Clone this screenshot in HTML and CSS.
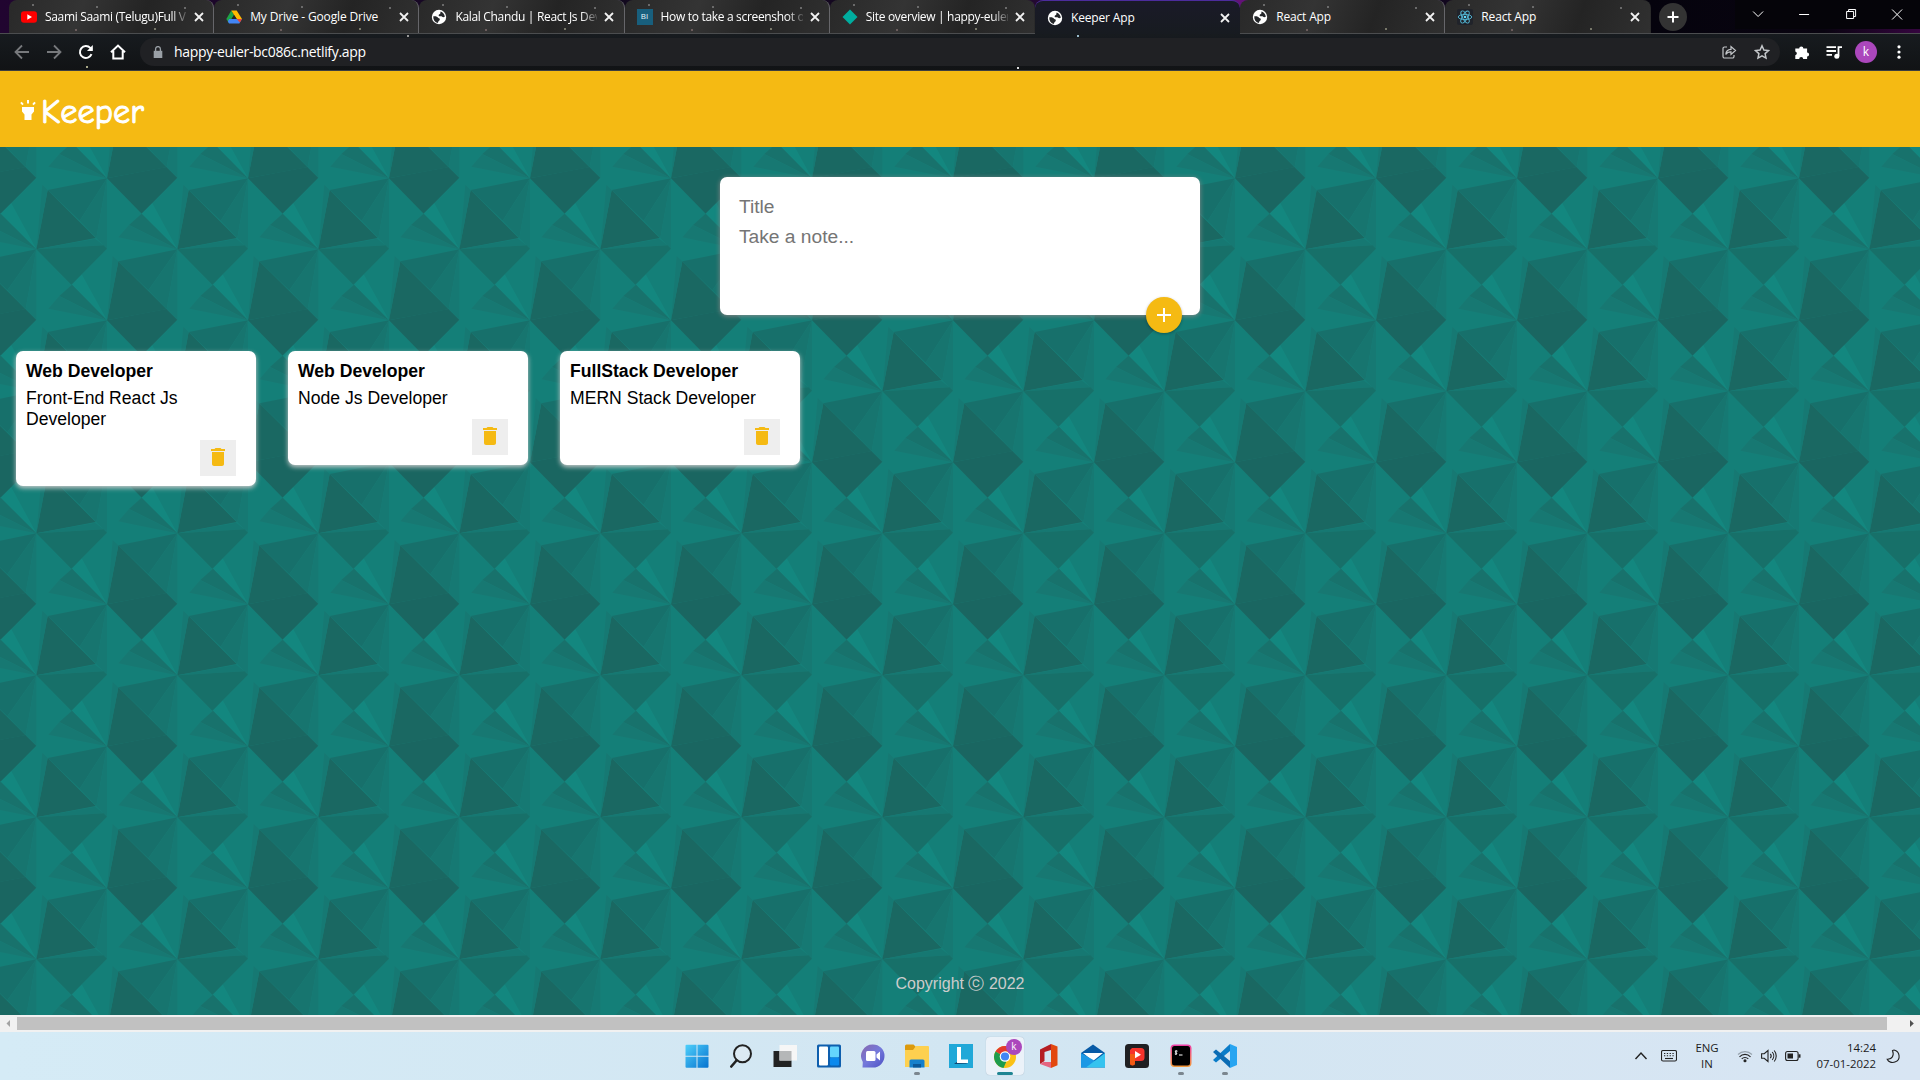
FILE: index.html
```html
<!DOCTYPE html>
<html lang="en">
<head>
<meta charset="utf-8">
<title>Keeper App</title>
<link rel="stylesheet" href="styles.css">
</head>
<body>
<svg class="defs" width="0" height="0">
  <defs>
    <symbol id="close" viewBox="0 0 16 16"><path d="M4 4l8 8M12 4l-8 8" stroke="#f2f2f2" stroke-width="1.8" fill="none"/></symbol>
    <symbol id="globe" viewBox="0 0 16 16"><circle cx="8" cy="8" r="7.2" fill="#fff"/><path d="M2.300 7.300c2.200-.3 4.200.1 4.900 1.600 1 .2 1.900.5 1.600 1.700-.2 1.100-1.200 1.200-1.500 2.100-.1.500-.4.900-.8 1.200C3.600 13.200 2 10.500 2.300 7.300zM9.600 2.500c2.300.8 4 2.800 4.200 5.300-.9.400-2 .5-2.700-.1-1-.9-2.300.1-3.200-.7-.9-.9.300-1.500 1-1.900.9-.6.200-1.600.7-2.600z" fill="#25272a"/></symbol>
    <symbol id="trash" viewBox="0 0 24 24"><path d="M6 19c0 1.100.9 2 2 2h8c1.100 0 2-.9 2-2V7H6v12zM19 4h-3.500l-1-1h-5l-1 1H5v2h14V4z" fill="#f5ba13"/></symbol>
    <g id="facets">
      <path d="M321 313L355 136 500 280z" fill="#1a6862"/>
      <path d="M321 313L500 279 532 311 425 419z" fill="#1a6661"/>
      <path d="M355 136L532 100 445 223z" fill="#17706b"/>
      <path d="M532 100L445 223 500 280z" fill="#17756f"/>
      <path d="M532 100L500 280 532 311z" fill="#167973"/>
      <path d="M338 120L355 136 321 313z" fill="#167973"/>
      <path d="M216 206L245 175 321 313z" fill="#13877f"/>
      <path d="M216 206L321 313 178 240z" fill="#18726c"/>
      <path d="M178 240L321 313 145 278z" fill="#177872"/>
      <path d="M532 526L566 348 710 492z" fill="#1a6862"/>
      <path d="M566 348L744 313 662 440z" fill="#17706b"/>
      <path d="M744 313L662 440 712 492z" fill="#17756f"/>
      <path d="M744 313L712 492 744 524z" fill="#167973"/>
      <path d="M532 526L708 494 734 514z" fill="#167872"/>
      <path d="M532 526L734 514 744 524 637 632z" fill="#177069"/>
      <path d="M550 332L566 348 532 526z" fill="#167973"/>
      <path d="M425 419L457 388 532 526z" fill="#13877f"/>
      <path d="M425 419L532 526 387 453z" fill="#18726c"/>
      <path d="M387 453L532 526 355 490z" fill="#177872"/>
    </g>
    <pattern id="tile" width="141" height="142" patternUnits="userSpaceOnUse">
      <rect width="141" height="142" fill="#147f78"/>
      <g transform="scale(.33333) translate(0 9)">
        <use href="#facets"/><use href="#facets" x="-423"/><use href="#facets" x="-846"/>
        <use href="#facets" y="-426"/><use href="#facets" x="-423" y="-426"/><use href="#facets" x="-846" y="-426"/>
      </g>
    </pattern>
  </defs>
</svg>

<div class="window">
  <div class="tabstrip">
    <div class="tab">
      <svg class="fav" viewBox="0 0 16 16"><rect y="2.300" width="16" height="11.400" rx="3" fill="#f00"/><path d="M6.300 5.300v5.400L11 8z" fill="#fff"/></svg>
      <span class="label fade">Saami Saami (Telugu)Full V</span><svg class="x"><use href="#close"/></svg>
    </div>
    <div class="tab">
      <svg class="fav" viewBox="0 0 16 16"><path d="M5.300 1.500L8 6 3 14.200.3 10z" fill="#1ea446"/><path d="M5.300 1.500h5.400L16 10h-5.300z" fill="#ffba00"/><path d="M3.200 10H16l-2.700 4.500H3L1.800 12.300z" fill="#4285f4"/><path d="M8 6l2.700 4H5.500z" fill="#252525"/><path d="M10.700 10H16l-2.100 3.500z" fill="#ea4335"/></svg>
      <span class="label">My Drive - Google Drive</span><svg class="x"><use href="#close"/></svg>
    </div>
    <div class="tab">
      <svg class="fav"><use href="#globe"/></svg>
      <span class="label fade">Kalal Chandu | React Js Dev</span><svg class="x"><use href="#close"/></svg>
    </div>
    <div class="tab">
      <span class="fav bi">BI</span>
      <span class="label fade">How to take a screenshot o</span><svg class="x"><use href="#close"/></svg>
    </div>
    <div class="tab last">
      <svg class="fav" viewBox="0 0 16 16"><path d="M8 .5L15.500 8 8 15.500.5 8z" fill="#00ad9f"/></svg>
      <span class="label fade">Site overview | happy-euler</span><svg class="x"><use href="#close"/></svg>
    </div>
    <div class="tab active">
      <svg class="fav"><use href="#globe"/></svg>
      <span class="label">Keeper App</span><svg class="x"><use href="#close"/></svg>
    </div>
    <div class="tab">
      <svg class="fav"><use href="#globe"/></svg>
      <span class="label">React App</span><svg class="x"><use href="#close"/></svg>
    </div>
    <div class="tab last">
      <svg class="fav" viewBox="0 0 16 16"><rect width="16" height="16" rx="2" fill="#20232a"/><g fill="none" stroke="#53b9d6" stroke-width=".9"><ellipse cx="8" cy="8" rx="6.800" ry="2.600"/><ellipse cx="8" cy="8" rx="6.800" ry="2.600" transform="rotate(60 8 8)"/><ellipse cx="8" cy="8" rx="6.800" ry="2.600" transform="rotate(120 8 8)"/></g><circle cx="8" cy="8" r="1.300" fill="#61dafb"/></svg>
      <span class="label">React App</span><svg class="x"><use href="#close"/></svg>
    </div>
    <div class="newtab"><svg width="16" height="16" viewBox="0 0 16 16"><path d="M8 2.500v11M2.500 8h11" stroke="#fff" stroke-width="2"/></svg></div>
    <div class="controls">
      <svg viewBox="0 0 46 28"><path d="M18 11.500l5 5 5-5" /></svg>
      <svg viewBox="0 0 46 28"><path d="M18 14.500h10"/></svg>
      <svg viewBox="0 0 46 28"><path d="M18.500 11.500h7v7h-7zM20.500 11.500v-2h7v7h-2"/></svg>
      <svg viewBox="0 0 46 28"><path d="M18 9.500l10 10M28 9.500l-10 10"/></svg>
    </div>
  </div>

  <div class="toolbar">
    <div class="nav">
      <svg viewBox="0 0 16 16"><path d="M15 8H2M8 1.500L1.500 8 8 14.500" stroke="#77797c"/></svg>
      <svg viewBox="0 0 16 16"><path d="M1 8h13M8 1.500L14.500 8 8 14.500" stroke="#77797c"/></svg>
      <svg viewBox="0 0 16 16"><path d="M13.500 10.200A6 6 0 1 1 12.300 3.900L14 5.600" stroke="#fff" stroke-width="2"/><path d="M14.800 1v6H9z" fill="#fff"/></svg>
      <svg viewBox="0 0 16 16"><path d="M1 8.300L8 1.600l7 6.700M3.300 7v7.500h9.400V7" stroke="#fff" stroke-width="2"/></svg>
    </div>
    <div class="omnibox">
      <svg class="lock" viewBox="0 0 10 12"><path d="M.7 4.800h8.600V12H.7z" fill="#9aa0a6"/><path d="M2.600 5V3a2.400 2.400 0 0 1 4.800 0v2" fill="none" stroke="#9aa0a6" stroke-width="1.300"/></svg>
      <span class="url">happy-euler-bc086c.netlify.app</span>
      <svg class="act" viewBox="0 0 16 16"><path d="M6 3H3.500a1.500 1.500 0 0 0-1.500 1.500v8A1.500 1.500 0 0 0 3.500 14h8a1.500 1.500 0 0 0 1.500-1.500V11M4.800 10.500C5 7 7 5.400 10 5.300V2.500l4.500 4-4.500 4V7.800C7.500 7.700 6 8.500 4.800 10.500z"/></svg>
      <svg class="act" viewBox="0 0 16 16"><path d="M8 1.800l1.900 4.200 4.600.5-3.400 3.100.9 4.500-4-2.300-4 2.300.9-4.500L1.500 6.500 6.100 6z" stroke-width="1.500"/></svg>
    </div>
    <div class="tools">
      <svg viewBox="0 0 16 16"><path d="M1.300 4.500h3.900a2.100 2.100 0 1 1 4.200 0h3.700v3.900a2 2 0 1 1 0 4V15H9.200a2 2 0 0 0-4 0H1.300v-3.700a2 2 0 0 0 0-3.900z" fill="#fff"/></svg>
      <svg viewBox="0 0 16 16"><path d="M.5 3.200h9.500M.5 7h9.500M.5 10.800h5.500M12.500 12V3.200H16" fill="none" stroke="#fff" stroke-width="1.800"/><circle cx="10.800" cy="12.200" r="2.500" fill="#fff"/></svg>
      <span class="avatar">k</span>
      <svg viewBox="0 0 16 16" fill="#fff"><circle cx="8" cy="2.800" r="1.600"/><circle cx="8" cy="8" r="1.600"/><circle cx="8" cy="13.200" r="1.600"/></svg>
    </div>
  </div>

  <main class="page">
    <svg class="wallpaper" width="1920" height="944"><rect width="1920" height="944" fill="url(#tile)"/></svg>
    <header class="header">
      <svg width="16" height="22" viewBox="0 0 16 22"><path d="M2 8h12v4.500l-2.500 3V21h-7v-5.500L2 12.500zM7 1h2v3.500H7zM.2 4l1.500-1.200 2 2.200-1.400 1.200zM15.800 4l-1.500-1.200-2 2.200 1.400 1.200z" fill="#fff"/></svg>
      <h1>Keeper</h1>
    </header>
    <form class="create">
      <span class="field">Title</span>
      <span class="field">Take a note...</span>
      <span class="add"><svg width="24" height="24" viewBox="0 0 24 24"><path d="M19 13h-6v6h-2v-6H5v-2h6V5h2v6h6v2z" fill="#fff"/></svg></span>
    </form>
    <section class="notes">
      <article class="note"><h2>Web Developer</h2><p>Front-End React Js Developer</p><span class="delete"><svg><use href="#trash"/></svg></span></article>
      <article class="note"><h2>Web Developer</h2><p>Node Js Developer</p><span class="delete"><svg><use href="#trash"/></svg></span></article>
      <article class="note"><h2>FullStack Developer</h2><p>MERN Stack Developer</p><span class="delete"><svg><use href="#trash"/></svg></span></article>
    </section>
    <footer class="footer">Copyright ⓒ 2022</footer>
  </main>

  <div class="scrollbar">
    <svg viewBox="0 0 17 17"><path d="M10 5v7L6.500 8.500z" fill="#a3a3a3"/></svg>
    <div class="thumb"></div>
    <svg class="right" viewBox="0 0 17 17"><path d="M7 5v7l3.800-3.500z" fill="#505050"/></svg>
  </div>

  <div class="taskbar">
    <div class="apps">
      <div class="app"><svg viewBox="0 0 24 24"><defs><linearGradient id="w" x2="1" y2="1"><stop stop-color="#4fd0fb"/><stop offset="1" stop-color="#0672cf"/></linearGradient></defs><path d="M.5 1.700A1 1 0 0 1 1.500.7h10v11H.500zM12.500.7h10a1 1 0 0 1 1 1v10h-11zM.5 12.700h11v11h-10a1 1 0 0 1-1-1zM12.500 12.700h11v10a1 1 0 0 1-1 1h-10z" fill="url(#w)"/></svg></div>
      <div class="app"><svg viewBox="0 0 24 24"><circle cx="13.500" cy="9.800" r="8.500" fill="#dceaf3" stroke="#222" stroke-width="2"/><path d="M7.500 16.500L2.300 22.500" stroke="#222" stroke-width="2.600" stroke-linecap="round"/></svg></div>
      <div class="app"><svg viewBox="0 0 24 24"><path d="M.5 7h18v16H.500z" fill="#222"/><path d="M6.500 1H24v15.500H6.500z" fill="#f6f6f6"/><path d="M6.500 7h12v9.500h-12z" fill="#b5b7b8"/></svg></div>
      <div class="app"><svg viewBox="0 0 24 24"><rect y=".5" width="24" height="23" rx="1.500" fill="#0e5fae"/><rect x="2" y="2.500" width="9" height="19" rx="1" fill="#fff"/><rect x="13" y="2.500" width="9" height="11" rx="1" fill="#65d5fd"/><rect x="13" y="13.500" width="9" height="8" rx="1" fill="#0b89ed"/></svg></div>
      <div class="app"><svg viewBox="0 0 24 24"><defs><linearGradient id="c" x2="1" y2="1"><stop stop-color="#8867ad"/><stop offset=".5" stop-color="#7479db"/><stop offset="1" stop-color="#4c50c4"/></linearGradient></defs><path d="M12 .5a11.500 11.500 0 1 1 0 23H1.500L1.800 18A11.500 11.500 0 0 1 12 .5z" fill="url(#c)"/><rect x="5" y="7" width="9.500" height="10" rx="1.500" fill="#fff"/><path d="M15.500 10.500L19 7.500v9l-3.500-3z" fill="#fff"/></svg></div>
      <div class="app run"><svg viewBox="0 0 24 24"><path d="M0 2a1.500 1.500 0 0 1 1.500-1.500h7L11 3v4H0z" fill="#dc9a0c"/><path d="M0 6h8l3-4h12a1 1 0 0 1 1 1v20H0z" fill="#fdd04f"/><path d="M4.500 23.500V17a1.500 1.500 0 0 1 1.500-1.500h12a1.500 1.500 0 0 1 1.500 1.500v6.500z" fill="#1580cc"/><path d="M8 20h8v3.500H8z" fill="#0a5899"/></svg></div>
      <div class="app"><svg viewBox="0 0 24 24"><rect width="24" height="24" fill="#21a8d8"/><path d="M8 3v15l-3 2 14-.5-8-2z" fill="#103f68"/><path d="M8 3h4v12.500h7V19H8z" fill="#fff"/></svg></div>
      <div class="app current"><svg viewBox="0 0 24 24"><circle cx="12" cy="13" r="11" fill="#fbc116"/><path d="M12 13L2.500 7.500a11 11 0 0 1 19-.0H12z" fill="#e33b2e"/><path d="M2.500 7.500L12 13l1 5.300-2.500 5.600A11 11 0 0 1 2.500 7.500z" fill="#1e9c4d"/><circle cx="12" cy="12.500" r="5.300" fill="#fff"/><circle cx="12" cy="12.500" r="4.100" fill="#4285f4"/></svg><span class="badge">k</span></div>
      <div class="app"><svg viewBox="0 0 24 24"><path d="M3 5.500L14 0v6l-6.500 2v9L3 20z" fill="#b51d22"/><path d="M14 0l6.500 2.500v18.700L14 24z" fill="#e2480f"/><path d="M3 20l3.500-2H14v6z" fill="#e56480"/></svg></div>
      <div class="app"><svg viewBox="0 0 24 24"><path d="M0 9L12 .5 24 9v14.500H0z" fill="#075aa6"/><path d="M2 9h20l-10 8z" fill="#fff"/><path d="M0 9l15 8.500-8 6H0z" fill="#1c98e5"/><path d="M24 9L5 23.500h19z" fill="#35c3ef"/></svg></div>
      <div class="app"><svg viewBox="0 0 24 24"><rect width="24" height="24" rx="3.500" fill="#202022"/><path d="M7 4h9a3.500 3.500 0 0 1 3.500 3.500v6A3.500 3.500 0 0 1 16 17h-6v2a2.500 2.500 0 1 1-5-.5L5 6z" fill="#f6332c"/><path d="M5 10h5v9a2.500 2.500 0 1 1-5 0z" fill="#f35a14"/><path d="M10 7l6 3.700-6 3.600z" fill="#fff"/></svg></div>
      <div class="app run"><svg viewBox="0 0 24 24"><defs><linearGradient id="t" x2="0" y2="1"><stop stop-color="#ee3ba6"/><stop offset="1" stop-color="#f29a38"/></linearGradient></defs><rect x="1.500" y=".5" width="21" height="22.500" rx="4" fill="url(#t)"/><rect x="3" y="2" width="18" height="19.500" rx="2.500" fill="#000"/><path d="M8.500 7.200c-2-.8-3 .8-1.500 1.400 1.600.6.600 2.100-1.200 1.300M7 6v5M10 11h3.500" stroke="#fff" fill="none"/></svg></div>
      <div class="app run"><svg viewBox="0 0 24 24"><path d="M17 0l7 3v18l-7 3z" fill="#28a5f1"/><path d="M17 0v7L3 18.500l-3-2.500z" fill="#0a7cc8"/><path d="M0 8l3-2.500L17 17v7z" fill="#0b6cb4"/></svg></div>
    </div>
    <div class="tray">
      <svg class="i-caret" viewBox="0 0 16 16"><path d="M2.500 11L8 5l5.500 6" stroke-width="1.400"/></svg>
      <svg class="i-key" viewBox="0 0 16 16"><rect x=".5" y="2.500" width="15" height="10.500" rx="1.500"/><path d="M3 5.500h10M3 7.800h10" stroke-dasharray="1.300 1.500"/><path d="M4 10.500h8"/></svg>
      <div class="lang"><span>ENG</span><span>IN</span></div>
      <svg class="i-wifi" viewBox="0 0 16 16"><path d="M1 6.500a10 10 0 0 1 14 0" stroke="#96a2ad"/><path d="M2.500 8.800a7.500 7.500 0 0 1 11 0M4.700 10.900a4.600 4.600 0 0 1 6.600 0"/><circle cx="8" cy="12.700" r="1" fill="#222"/></svg>
      <svg class="i-vol" viewBox="0 0 16 16"><path d="M.6 5.700h2.600L7 2.500v11L3.200 10.300H.6zM9.300 5.800a3.400 3.400 0 0 1 0 4.400M11.200 4a6 6 0 0 1 0 8M13.200 2.500a8.500 8.500 0 0 1 0 11"/></svg>
      <svg class="i-bat" viewBox="0 0 16 16"><rect x=".6" y="3.500" width="12.500" height="9" rx="2"/><path d="M2.500 5.500H8v5H2.500z" fill="#222" stroke="none"/><path d="M14.500 6.300v3.400" stroke-width="2"/></svg>
      <div class="clock"><span>14:24</span><span>07-01-2022</span></div>
      <svg class="i-moon" viewBox="0 0 16 16"><path d="M9 2c6 1.500 7 9.500 1.500 11.800C7 15.300 3.300 14 2.200 11.300 7 11.600 9.500 7.500 7.500 2.500z"/></svg>
    </div>
  </div>
</div>
</body>
</html>
```
FILE: styles.css
```css
* { box-sizing: border-box; }
body { margin: 0; overflow: hidden; font-family: "Liberation Sans", Arial, sans-serif; }
.defs { position: absolute; }
svg { display: block; flex: none; }
.window { width: 1920px; height: 1080px; display: flex; flex-direction: column; }

/* browser chrome */
.tabstrip {
  height: 33px; flex: none; display: flex; padding-left: 9px;
  font: 12px/16px "Open Sans", "Noto Sans", sans-serif; color: #fff;
  background: linear-gradient(90deg, #210530, #11091d 35%, #170723 52%, #5a136f 62%, #67117b 66%, #130720 74%, #05030d 86%, #090410 95%, #35053f);
}
.tab {
  width: 205.200px; flex: none; display: flex; align-items: center; padding: 1px 0 0 12px;
  border-radius: 8px 8px 0 0; border-right: 1px solid #66666a;
  background:
    radial-gradient(circle at 24px 5px, #777 0 .6px, transparent 1.200px),
    radial-gradient(circle at 146px 29px, #887 0 .6px, transparent 1.200px),
    radial-gradient(circle at 88px 7px, #777 0 .6px, transparent 1.200px),
    radial-gradient(circle at 67px 30px, #766 0 .6px, transparent 1.200px),
    radial-gradient(circle at 176px 8px, #777 0 .6px, transparent 1.200px),
    linear-gradient(110deg, #292929, #343434 35%, #242424 65%, #303030);
}
.tab.last { border-right-color: transparent; }
.tab.active { background: linear-gradient(#1a1a28, #171b20); border-top: 1px solid #4c2c9c; border-right: 0; height: 34px; padding-top: 0; position: relative; }
.fav { width: 16px; height: 16px; margin-right: 8px; flex: none; }
.bi { background: #185f7d; color: #e6f4fa; font: 8px/14px "Open Sans", sans-serif; text-align: center; }
.label { width: 142px; white-space: nowrap; letter-spacing: -.15px; }
.label.fade { letter-spacing: -.32px; -webkit-mask-image: linear-gradient(90deg, #000 126px, transparent 145px); mask-image: linear-gradient(90deg, #000 126px, transparent 145px); }
.x { width: 16px; height: 16px; margin-left: 4px; }
.newtab { width: 28px; height: 28px; margin: 3px 0 0 8px; border-radius: 50%; background: #333; display: flex; align-items: center; justify-content: center; }
.controls { display: flex; margin-left: auto; height: 29px; padding-top: 0; background: #050409; }
.controls svg { width: 46.200px; height: 28px; fill: none; stroke: #fff; }
.toolbar {
  height: 38px; flex: none; display: flex; align-items: center; border-top: 1px solid #4b4d4f; border-bottom: 1px solid #3c3d40;
  background:
    radial-gradient(circle at 87px 33px, #aa8 0 .7px, transparent 1.300px),
    radial-gradient(circle at 408px 2px, #999 0 .7px, transparent 1.300px),
    radial-gradient(circle at 1018px 34px, #ddd 0 .7px, transparent 1.300px),
    radial-gradient(circle at 1078px 2px, #9bc 0 .7px, transparent 1.300px),
    linear-gradient(#171b1f, #111315);
}
.nav { display: flex; gap: 16px; padding-left: 14px; width: 140px; flex: none; }
.nav svg { width: 16px; height: 16px; fill: none; stroke-width: 1.800; }
.omnibox { width: 1640px; height: 28px; border-radius: 14px; background: #202124; display: flex; align-items: center; padding: 0 10px 0 13px; flex: none; }
.lock { width: 10px; height: 12px; }
.url { margin-left: 11px; flex: 1; font: 14px/20px "Open Sans", "Noto Sans", sans-serif; letter-spacing: -.33px; color: #fff; }
.act { width: 16px; height: 16px; margin-left: 17px; fill: none; stroke: #c4c7ca; stroke-width: 1.200; }
.tools { display: flex; align-items: center; padding-left: 14px; }
.tools svg { width: 16px; height: 16px; margin-right: 16px; }
.tools .avatar { width: 22px; height: 22px; margin: 0 14px 0 -3px; border-radius: 50%; background: #ab47bc; color: #fff; font: 12px/21px "Open Sans", sans-serif; text-align: center; }

/* page */
.page { height: 944px; flex: none; display: flex; flex-direction: column; position: relative; background: #147f78; overflow: hidden; }
.wallpaper { position: absolute; inset: 0; }
.header { height: 76px; flex: none; display: flex; align-items: center; padding: 0 20px; background: #f5ba13; position: relative; }
.header svg { margin-top: 1px; }
.header h1 { margin: 5px 0 0 5px; font: 400 34.400px/44px "Comic Neue", "McLaren", Lato, cursive; color: #fff; -webkit-text-stroke: 1px #fff; }
.create {
  width: 480px; height: 138px; flex: none; margin: 30px auto 0; padding: 15px 19px; position: relative;
  display: flex; flex-direction: column; background: #fff; border-radius: 7px; box-shadow: 0 1px 5px rgb(138, 137, 137);
}
.field { font-size: 19.200px; line-height: 30px; height: 30px; color: #757575; }
.add { position: absolute; right: 18px; bottom: -18px; width: 36px; height: 36px; border-radius: 50%; background: #f5ba13; box-shadow: 0 1px 3px rgba(0, 0, 0, .3); display: flex; align-items: center; justify-content: center; }
.notes { display: flex; align-items: flex-start; gap: 32px; margin: 36px 16px 0; position: relative; }
.note { width: 240px; padding: 10px; background: #fff; border-radius: 7px; box-shadow: 0 2px 5px #ccc; display: flex; flex-direction: column; }
.note h2 { margin: 0 0 7px; font-size: 17.600px; line-height: 20px; }
.note p { margin: 0 0 10px; font-size: 17.600px; line-height: 21px; }
.delete { width: 36px; height: 36px; margin-right: 10px; align-self: flex-end; background: #eee; display: flex; justify-content: center; padding-top: 5px; }
.delete svg { width: 24px; height: 24px; }
.footer { margin-top: auto; padding-bottom: 21px; position: relative; text-align: center; font-size: 16px; line-height: 20px; color: #ccc; }

.scrollbar { height: 17px; flex: none; display: flex; align-items: center; background: #f1f1f1; padding-bottom: 1px; }
.scrollbar svg { width: 17px; height: 17px; }
.scrollbar .right { margin-left: auto; }
.thumb { width: 1870px; height: 13px; background: #c1c1c1; }

/* taskbar */
.taskbar { height: 48px; flex: none; display: flex; justify-content: flex-end; background: linear-gradient(90deg, #d5ebf6, #d2e6f2 50%, #d8e5f3); position: relative; }
.apps { display: flex; position: absolute; left: 675px; top: 0; }
.app { width: 44px; height: 48px; display: flex; justify-content: center; align-items: center; position: relative; }
.app svg { width: 24px; height: 24px; }
.run::after { content: ""; position: absolute; bottom: 5px; width: 6px; height: 3px; border-radius: 2px; background: #7b868f; }
.current::before { content: ""; position: absolute; inset: 5px 3px; border-radius: 4px; background: #ebf2f9; box-shadow: 0 0 1px #9ab; }
.current svg { position: relative; }
.current::after { content: ""; position: absolute; bottom: 5px; width: 16px; height: 3px; border-radius: 2px; background: #1f8593; }
.badge { position: absolute; left: 23px; top: 7px; width: 16px; height: 16px; border-radius: 50%; background: #ab47bc; color: #fff; font: 10px/15px "Open Sans", sans-serif; text-align: center; }
.tray { display: flex; align-items: center; padding-right: 19px; font: 11.400px/16px "Open Sans", "Noto Sans", sans-serif; color: #1c1c1c; }
.tray svg { width: 16px; height: 16px; fill: none; stroke: #222; stroke-width: 1.100; }
.tray .i-key { margin-left: 12px; }
.lang { width: 24px; margin: 0 18px 0 18px; display: flex; flex-direction: column; align-items: center; }
.i-vol, .i-bat { margin-left: 8px; }
.clock { width: 75px; display: flex; flex-direction: column; align-items: flex-end; }
.i-moon { margin-left: 9px; }
```
